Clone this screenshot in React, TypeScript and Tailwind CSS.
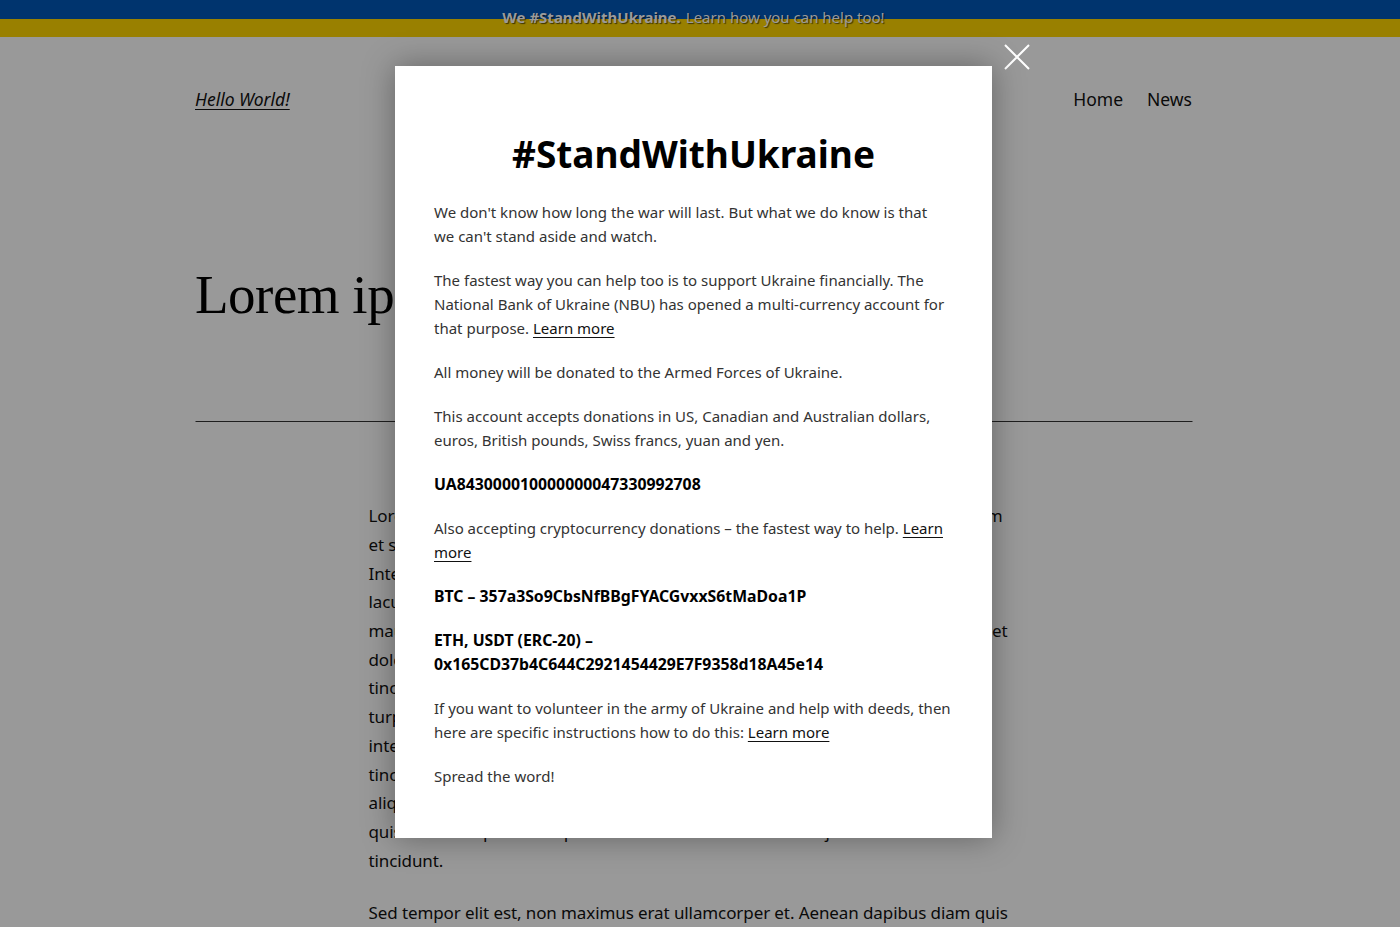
import { FC } from "react";

const sans = "font-['Noto_Sans','Open_Sans',sans-serif]";

// [text, width of a justified line or undefined]
const bodyLines: [string, string?][] = [
  ["Lorem ipsum dolor sit amet, consectetur adipiscing elit. Aenean dictum", "w-[634px]"],
  ["et sapien vel aliquet. Maecenas consequat mauris non lorem"],
  ["Integer hendrerit, mauris a placerat dictum, justo massa porta"],
  ["lacus, nec finibus elit lorem sed ante. Nulla facilisi. Donec"],
  ["mauris neque, vestibulum nec sagittis in, suscipit sit amet et", "w-[639px]"],
  ["dolor. Curabitur luctus mauris sed tellus ornare, sed porta"],
  ["tincidunt nibh. Vestibulum ante ipsum primis in faucibus orci"],
  ["turpis egestas. Praesent varius pharetra orci, eget dapibus"],
  ["interdum et malesuada fames ac ante ipsum primis in faucibus"],
  ["tincidunt eros, in hendrerit lectus ullamcorper vel. Proin"],
  ["aliquam erat volutpat. Sed dignissim ligula vel velit gravida"],
  ["quis mollis neque consequat. Nam commodo elementum justo sed"],
  ["tincidunt."],
];

const LearnMore: FC<{ label?: string }> = ({ label = "Learn more" }) => (
  <a href="#" className="underline underline-offset-[3px] decoration-1 text-[#111]">
    {label}
  </a>
);

export default function App() {
  return (
    <div className={`relative h-[927px] w-[1400px] overflow-hidden bg-white ${sans}`}>
      {/* Page behind the dialog */}
      <div className="flex flex-col">
        <div className="flex h-[37px] flex-col">
          <div className="h-[19px] bg-[#0057b7]" />
          <div className="h-[18px] bg-[#ffd500]" />
        </div>

        <div className="mx-auto flex w-[997px] -translate-x-[6.5px] flex-col">
          <header className="flex items-center justify-between pt-[49px] text-[17.5px] text-[#111]">
            <a href="#" className="italic underline underline-offset-[3px]">
              Hello World!
            </a>
            <nav className="flex gap-6">
              <span>Home</span>
              <span>News</span>
            </nav>
          </header>

          <h1 className="mt-[155px] font-['Liberation_Serif',serif] text-[55px] font-normal leading-none tracking-[-0.5px] text-black">
            Lorem ipsum dolor sit amet
          </h1>

          <hr className="mt-[99px] border-t border-[#333]" />

          <div className="mx-auto mt-[80px] w-[650px] text-[17px] leading-[28.7px] tracking-[-0.1px] text-[#111]">
            <p>
              {bodyLines.map(([l, w], i) => (
                <span
                  key={i}
                  className={w ? `block ${w} whitespace-nowrap [text-align-last:justify]` : "block whitespace-nowrap"}
                >
                  {l}
                </span>
              ))}
            </p>
            <p className="mt-[24px] whitespace-nowrap">
              Sed tempor elit est, non maximus erat ullamcorper et. Aenean dapibus diam quis
            </p>
          </div>
        </div>
      </div>

      {/* Overlay */}
      <div className="absolute inset-0 bg-black/40" />

      <div className="absolute left-0 right-[13px] top-0 flex h-[35px] items-center justify-center text-[15px] text-[#9a9a9a] [text-shadow:1px_1px_1px_rgba(0,0,0,0.6)]">
        <span className="font-bold">We #StandWithUkraine.</span>
        <span className="ml-[5px]">Learn how you can help too!</span>
      </div>

      {/* Close button */}
      <button className="absolute left-[1003px] top-[43px] h-[28px] w-[28px]">
        <svg viewBox="0 0 28 28" className="h-full w-full" fill="none" stroke="white" strokeWidth="2">
          <path d="M2 2 L26 26 M26 2 L2 26" />
        </svg>
      </button>

      {/* Dialog */}
      <div className="absolute left-[395px] top-[66px] flex h-[772px] w-[597px] flex-col bg-white pl-[39px] pr-[39px] pt-[64px] text-[15px] leading-[24px] text-[#333] shadow-[0_0_30px_rgba(0,0,0,0.35)]">
        <h2 className="mb-[22px] text-center text-[37px] font-bold leading-[48px] text-black">#StandWithUkraine</h2>
        <div className="flex w-[519px] flex-col gap-[20px]">
          <p>
            We don't know how long the war will last. But what we do know is that
            <br />
            we can't stand aside and watch.
          </p>
          <p>
            The fastest way you can help too is to support Ukraine financially. The National Bank of Ukraine (NBU) has
            opened a multi-currency account for that purpose. <LearnMore />
          </p>
          <p>All money will be donated to the Armed Forces of Ukraine.</p>
          <p>
            This account accepts donations in US, Canadian and Australian dollars, euros, British pounds, Swiss francs,
            yuan and yen.
          </p>
          <p className="text-[15.8px] font-bold text-black">UA843000010000000047330992708</p>
          <p>
            Also accepting cryptocurrency donations – the fastest way to help. <LearnMore />
          </p>
          <p className="text-[15.8px] font-bold text-black">BTC – 357a3So9CbsNfBBgFYACGvxxS6tMaDoa1P</p>
          <p className="text-[15.8px] font-bold text-black">
            ETH, USDT (ERC-20) –
            <br />
            0x165CD37b4C644C2921454429E7F9358d18A45e14
          </p>
          <p>
            If you want to volunteer in the army of Ukraine and help with deeds, then here are specific instructions how
            to do this: <LearnMore />
          </p>
          <p>Spread the word!</p>
        </div>
      </div>
    </div>
  );
}
